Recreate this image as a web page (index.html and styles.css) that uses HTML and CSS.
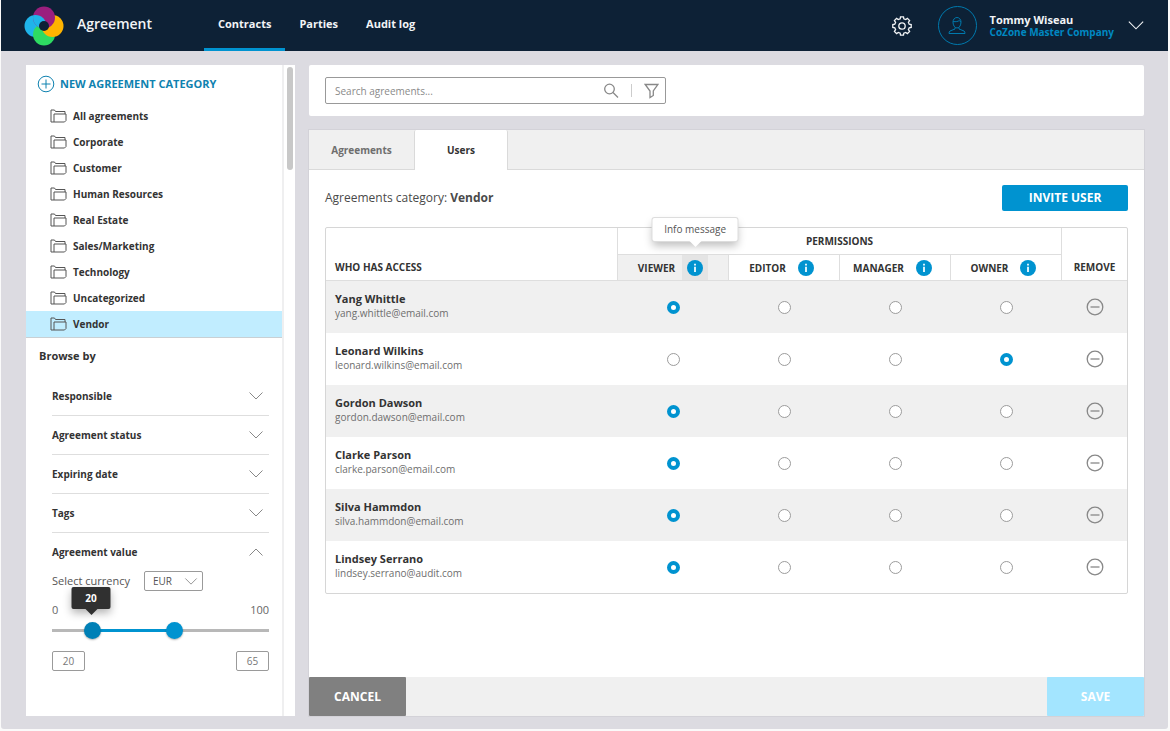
FILE: index.html
```html
<!DOCTYPE html>
<html lang="en">
<head>
    <meta charset="UTF-8">
    <meta name="viewport" content="width=device-width, initial-scale=1.0">
    <title>Agreement - Contracts</title>
    <link rel="stylesheet" href="styles.css">
</head>
<body>
    <svg width="0" height="0" class="sprite" aria-hidden="true">
        <symbol id="folder" viewBox="0 0 17 14">
            <path d="M4 13V5h12v6.500L14.500 13H1V1h3.500L5.500 2.500H15V5"/>
        </symbol>
        <symbol id="chevron" viewBox="0 0 16 10">
            <path d="M1.500 1.500 8 8l6.500-6.500"/>
        </symbol>
        <symbol id="minus" viewBox="0 0 18 18">
            <circle cx="9" cy="9" r="7.800"/>
            <path d="M4.500 9h9"/>
        </symbol>
        <symbol id="info" viewBox="0 0 16 16">
            <circle cx="8" cy="8" r="8" fill="#0093d0"/>
            <path d="M7 3.800h2v1.700H7zM7 6.700h2V12H7z" fill="#d9f1fb"/>
        </symbol>
    </svg>

    <div class="app">
        <header class="topbar">
            <a href="#" class="brand">
                <svg class="logo" width="40" height="40" viewBox="0 0 40 40" aria-hidden="true">
                    <clipPath id="petal"><circle cx="20" cy="11.500" r="11"/></clipPath>
                    <circle cx="11.500" cy="20" r="11" fill="#1fb4ea"/>
                    <circle cx="20" cy="28.500" r="11" fill="#2edb62"/>
                    <circle cx="28.500" cy="20" r="11" fill="#ffb400"/>
                    <circle cx="20" cy="11.500" r="11" fill="#9b1f7e"/>
                    <circle cx="11.500" cy="20" r="11" fill="#1fb4ea" clip-path="url(#petal)"/>
                    <circle cx="20" cy="20" r="5" fill="#0d2136"/>
                </svg>
                <span>Agreement</span>
            </a>
            <nav class="main-nav">
                <a href="#" class="active">Contracts</a>
                <a href="#">Parties</a>
                <a href="#">Audit log</a>
            </nav>
            <div class="account">
                <button type="button" class="icon-btn settings" aria-label="Settings">
                    <svg width="20" height="20" viewBox="0 0 20 20">
                        <path d="M8.200 2.800 8.500.8h3l.3 2 1.900.8 1.700-1.200 2.200 2.200-1.200 1.700.8 1.900 2 .3v3l-2 .3-.8 1.900 1.200 1.700-2.200 2.200-1.700-1.200-1.900.8-.3 2h-3l-.3-2-1.900-.8-1.700 1.200-2.200-2.200 1.200-1.700-.8-1.900-2-.3v-3l2-.3.8-1.900-1.200-1.700 2.200-2.200 1.700 1.200z"/>
                        <circle cx="10" cy="10" r="3.200"/>
                    </svg>
                </button>
                <span class="avatar">
                    <svg width="18" height="20" viewBox="0 0 18 20" aria-hidden="true">
                        <path d="M5 6a4 4.500 0 0 1 8 0c0 3-1.500 6-4 6S5 9 5 6zM5.200 5.500c2.500.5 5 0 6-1 .5.7 1 1 1.600 1M7 11.500v1.500l-5 2c-.8.500-1 1.500-1 2.500h16c0-1-.2-2-1-2.500l-5-2v-1.500"/>
                    </svg>
                </span>
                <div class="who">
                    <strong>Tommy Wiseau</strong>
                    <span>CoZone Master Company</span>
                </div>
                <button type="button" class="icon-btn" aria-label="Account menu">
                    <svg width="18" height="11" viewBox="0 0 16 10"><use href="#chevron"/></svg>
                </button>
            </div>
        </header>

        <div class="layout">
            <aside class="sidebar">
                <div class="sidebar-body">
                    <button type="button" class="new-category">
                        <svg width="18" height="18" viewBox="0 0 18 18" aria-hidden="true">
                            <circle cx="9" cy="9" r="7.800"/>
                            <path d="M4.500 9h9M9 4.500v9"/>
                        </svg>
                        NEW AGREEMENT CATEGORY
                    </button>
                    <ul class="categories">
                        <li><a href="#"><svg><use href="#folder"/></svg>All agreements</a></li>
                        <li><a href="#"><svg><use href="#folder"/></svg>Corporate</a></li>
                        <li><a href="#"><svg><use href="#folder"/></svg>Customer</a></li>
                        <li><a href="#"><svg><use href="#folder"/></svg>Human Resources</a></li>
                        <li><a href="#"><svg><use href="#folder"/></svg>Real Estate</a></li>
                        <li><a href="#"><svg><use href="#folder"/></svg>Sales/Marketing</a></li>
                        <li><a href="#"><svg><use href="#folder"/></svg>Technology</a></li>
                        <li><a href="#"><svg><use href="#folder"/></svg>Uncategorized</a></li>
                        <li><a href="#" class="selected"><svg><use href="#folder"/></svg>Vendor</a></li>
                    </ul>
                    <h2>Browse by</h2>
                    <div class="filters">
                        <button type="button" class="filter">Responsible<svg><use href="#chevron"/></svg></button>
                        <button type="button" class="filter">Agreement status<svg><use href="#chevron"/></svg></button>
                        <button type="button" class="filter">Expiring date<svg><use href="#chevron"/></svg></button>
                        <button type="button" class="filter">Tags<svg><use href="#chevron"/></svg></button>
                        <button type="button" class="filter open">Agreement value<svg><use href="#chevron"/></svg></button>
                        <div class="currency">
                            <label for="currency">Select currency</label>
                            <span class="select">
                                <select id="currency">
                                    <option>EUR</option>
                                    <option>USD</option>
                                </select>
                                <svg><use href="#chevron"/></svg>
                            </span>
                        </div>
                        <div class="scale"><span>0</span><span>100</span></div>
                        <div class="slider">
                            <span class="fill" style="left: 18%; width: 38%"></span>
                            <input type="range" class="low" min="0" max="100" value="16" aria-label="Minimum value">
                            <input type="range" min="0" max="100" value="57" aria-label="Maximum value">
                            <span class="value-tip" style="left: 18%">20</span>
                        </div>
                        <div class="bounds">
                            <input type="text" value="20" aria-label="From">
                            <input type="text" value="65" aria-label="To">
                        </div>
                    </div>
                </div>
                <div class="scrollbar"><span></span></div>
            </aside>

            <main class="content">
                <section class="search-card">
                    <form class="search">
                        <input type="search" placeholder="Search agreements..." aria-label="Search agreements">
                        <button type="submit" class="icon-btn" aria-label="Search">
                            <svg width="16" height="16" viewBox="0 0 16 16">
                                <circle cx="6.500" cy="6" r="4.800"/>
                                <path d="m10 9.500 5 5"/>
                            </svg>
                        </button>
                        <span class="divider"></span>
                        <button type="button" class="icon-btn" aria-label="Filter">
                            <svg width="15" height="16" viewBox="0 0 15 16">
                                <path d="M1.200 1.500h12.600L9.300 8v4.500l-3.300 2V8z"/>
                            </svg>
                        </button>
                    </form>
                </section>

                <section class="panel">
                    <div class="tabs" role="tablist">
                        <button type="button" role="tab">Agreements</button>
                        <button type="button" role="tab" class="current" aria-selected="true">Users</button>
                    </div>
                    <div class="panel-body">
                        <div class="panel-head">
                            <p>Agreements category: <strong>Vendor</strong></p>
                            <button type="button" class="btn-primary">INVITE USER</button>
                        </div>
                        <table class="users">
                            <colgroup>
                                <col class="col-name">
                                <col class="col-role">
                                <col class="col-role">
                                <col class="col-role">
                                <col class="col-role">
                                <col class="col-remove">
                            </colgroup>
                            <thead>
                                <tr>
                                    <th rowspan="2" class="name">WHO HAS ACCESS</th>
                                    <th colspan="4" class="group">PERMISSIONS</th>
                                    <th rowspan="2" class="last">REMOVE</th>
                                </tr>
                                <tr>
                                    <th class="hovered">
                                        <div class="role">VIEWER
                                            <button type="button" class="info" aria-label="About viewer"><svg><use href="#info"/></svg><span class="tooltip">Info message</span></button>
                                        </div>
                                    </th>
                                    <th><div class="role">EDITOR <button type="button" class="info" aria-label="About editor"><svg><use href="#info"/></svg></button></div></th>
                                    <th><div class="role">MANAGER <button type="button" class="info" aria-label="About manager"><svg><use href="#info"/></svg></button></div></th>
                                    <th><div class="role">OWNER <button type="button" class="info" aria-label="About owner"><svg><use href="#info"/></svg></button></div></th>
                                </tr>
                            </thead>
                            <tbody>
                                <tr>
                                    <td class="name"><strong>Yang Whittle</strong><span>yang.whittle@email.com</span></td>
                                    <td><input type="radio" name="u1" aria-label="Viewer" checked></td>
                                    <td><input type="radio" name="u1" aria-label="Editor"></td>
                                    <td><input type="radio" name="u1" aria-label="Manager"></td>
                                    <td><input type="radio" name="u1" aria-label="Owner"></td>
                                    <td><button type="button" class="icon-btn remove" aria-label="Remove Yang Whittle"><svg><use href="#minus"/></svg></button></td>
                                </tr>
                                <tr>
                                    <td class="name"><strong>Leonard Wilkins</strong><span>leonard.wilkins@email.com</span></td>
                                    <td><input type="radio" name="u2" aria-label="Viewer"></td>
                                    <td><input type="radio" name="u2" aria-label="Editor"></td>
                                    <td><input type="radio" name="u2" aria-label="Manager"></td>
                                    <td><input type="radio" name="u2" aria-label="Owner" checked></td>
                                    <td><button type="button" class="icon-btn remove" aria-label="Remove Leonard Wilkins"><svg><use href="#minus"/></svg></button></td>
                                </tr>
                                <tr>
                                    <td class="name"><strong>Gordon Dawson</strong><span>gordon.dawson@email.com</span></td>
                                    <td><input type="radio" name="u3" aria-label="Viewer" checked></td>
                                    <td><input type="radio" name="u3" aria-label="Editor"></td>
                                    <td><input type="radio" name="u3" aria-label="Manager"></td>
                                    <td><input type="radio" name="u3" aria-label="Owner"></td>
                                    <td><button type="button" class="icon-btn remove" aria-label="Remove Gordon Dawson"><svg><use href="#minus"/></svg></button></td>
                                </tr>
                                <tr>
                                    <td class="name"><strong>Clarke Parson</strong><span>clarke.parson@email.com</span></td>
                                    <td><input type="radio" name="u4" aria-label="Viewer" checked></td>
                                    <td><input type="radio" name="u4" aria-label="Editor"></td>
                                    <td><input type="radio" name="u4" aria-label="Manager"></td>
                                    <td><input type="radio" name="u4" aria-label="Owner"></td>
                                    <td><button type="button" class="icon-btn remove" aria-label="Remove Clarke Parson"><svg><use href="#minus"/></svg></button></td>
                                </tr>
                                <tr>
                                    <td class="name"><strong>Silva Hammdon</strong><span>silva.hammdon@email.com</span></td>
                                    <td><input type="radio" name="u5" aria-label="Viewer" checked></td>
                                    <td><input type="radio" name="u5" aria-label="Editor"></td>
                                    <td><input type="radio" name="u5" aria-label="Manager"></td>
                                    <td><input type="radio" name="u5" aria-label="Owner"></td>
                                    <td><button type="button" class="icon-btn remove" aria-label="Remove Silva Hammdon"><svg><use href="#minus"/></svg></button></td>
                                </tr>
                                <tr>
                                    <td class="name"><strong>Lindsey Serrano</strong><span>lindsey.serrano@audit.com</span></td>
                                    <td><input type="radio" name="u6" aria-label="Viewer" checked></td>
                                    <td><input type="radio" name="u6" aria-label="Editor"></td>
                                    <td><input type="radio" name="u6" aria-label="Manager"></td>
                                    <td><input type="radio" name="u6" aria-label="Owner"></td>
                                    <td><button type="button" class="icon-btn remove" aria-label="Remove Lindsey Serrano"><svg><use href="#minus"/></svg></button></td>
                                </tr>
                            </tbody>
                        </table>
                    </div>
                    <footer class="panel-footer">
                        <button type="button" class="btn-cancel">CANCEL</button>
                        <button type="submit" class="btn-save">SAVE</button>
                    </footer>
                </section>
            </main>
        </div>
    </div>
</body>
</html>
```

FILE: styles.css
```css
* {
    box-sizing: border-box;
}
body {
    margin: 0;
    padding: 0 2px 2px 1px;
    min-height: 100vh;
    display: flex;
    background-color: #fafafa;
    font-family: "Open Sans", "Noto Sans", sans-serif;
    font-size: 11px;
    line-height: 16px;
    color: #333;
}
button, input, select {
    font: inherit;
    color: inherit;
    margin: 0;
}
button {
    padding: 0;
    border: none;
    background: none;
    cursor: pointer;
}
a {
    color: inherit;
    text-decoration: none;
}
svg {
    display: block;
    flex: none;
    fill: none;
    stroke: currentColor;
}
.sprite {
    position: absolute;
}
.app {
    flex: 1;
    display: flex;
    flex-direction: column;
    background-color: #dcdbe1;
    border-radius: 0 0 3px 3px;
}

/* Top bar */
.topbar {
    display: flex;
    align-items: center;
    height: 51px;
    padding: 0 23px;
    background-color: #0d2136;
    color: #f2f4f6;
}
.brand {
    display: flex;
    align-items: center;
    gap: 13px;
    font-size: 14px;
    font-weight: 600;
}
.brand span {
    padding-bottom: 3px;
}
.logo {
    stroke: none;
}
.main-nav {
    display: flex;
    align-self: stretch;
    margin-left: 52px;
    font-weight: bold;
}
.main-nav a {
    display: flex;
    align-items: center;
    padding: 0 14px;
    border-bottom: 3px solid transparent;
}
.main-nav .active {
    border-bottom-color: #0093d0;
}
.account {
    display: flex;
    align-items: center;
    margin-left: auto;
}
.icon-btn {
    display: flex;
    align-items: center;
    justify-content: center;
}
.settings {
    margin-right: 26px;
}
.settings svg {
    stroke-width: 1.3;
}
.avatar {
    display: flex;
    align-items: center;
    justify-content: center;
    width: 39px;
    height: 39px;
    margin-right: 13px;
    border: 1px solid #0079ad;
    border-radius: 50%;
    color: #0079ad;
}
.who {
    display: flex;
    flex-direction: column;
    margin-right: 13px;
    line-height: 13px;
}
.who span {
    font-size: 10px;
    font-weight: bold;
    color: #0088c2;
}

/* Layout */
.layout {
    flex: 1;
    display: flex;
    gap: 14px;
    padding: 14px 24px 13px 25px;
}
.sidebar {
    display: flex;
    width: 269px;
    background-color: #fff;
}
.sidebar-body {
    flex: 1;
    border-right: 2px solid #efeff0;
}
.scrollbar {
    padding: 2px 2px 0 3px;
}
.scrollbar span {
    display: block;
    width: 6px;
    height: 103px;
    border-radius: 3px;
    background-color: #c8c8c8;
}
.new-category {
    display: flex;
    align-items: center;
    gap: 5px;
    margin: 10px 0 10px 11px;
    font-weight: bold;
    color: #0f82b0;
}
.categories {
    list-style: none;
    margin: 0;
    padding: 0;
    font-size: 10px;
    font-weight: bold;
}
.categories a {
    display: flex;
    align-items: center;
    gap: 6px;
    height: 26px;
    padding-left: 24px;
}
.categories svg {
    width: 17px;
    height: 14px;
    color: #555;
}
.categories .selected {
    background-color: #c1edff;
    box-shadow: 0 1px 0 #c9d0d4;
}
h2 {
    margin: 11px 0 13px 13px;
    font-size: 11px;
    line-height: 16px;
}
.filters {
    padding: 0 13px 0 26px;
}
.filter {
    display: flex;
    align-items: center;
    justify-content: space-between;
    width: 100%;
    height: 39px;
    padding-right: 5px;
    border-bottom: 1px solid #dedede;
    font-size: 10px;
    font-weight: bold;
}
.filter svg,
.select svg {
    width: 16px;
    height: 10px;
    color: #888;
}
.filter.open {
    height: 37px;
    border-bottom: none;
}
.filter.open svg {
    transform: rotate(180deg);
}
.currency {
    display: flex;
    align-items: center;
    gap: 14px;
    margin-top: 1px;
    color: #555;
}
.select {
    position: relative;
    display: flex;
}
.select select {
    appearance: none;
    width: 59px;
    height: 20px;
    padding: 0 8px;
    border: 1px solid #9a9a9a;
    border-radius: 2px;
    background: none;
    font-size: 10px;
    line-height: 18px;
}
.select svg {
    position: absolute;
    right: 5px;
    top: 6px;
    width: 14px;
    height: 9px;
    pointer-events: none;
}
.scale {
    display: flex;
    justify-content: space-between;
    margin: 11px 0 3px;
    color: #666;
}
.slider {
    position: relative;
    height: 18px;
    background: linear-gradient(#b8b8b8, #b8b8b8) center / 100% 3px no-repeat;
}
.slider .fill {
    position: absolute;
    top: 8px;
    height: 3px;
    background-color: #0093d0;
}
.slider input {
    position: absolute;
    inset: 0;
    width: 100%;
    appearance: none;
    background: none;
    pointer-events: none;
}
.slider input::-webkit-slider-thumb {
    appearance: none;
    width: 17px;
    height: 17px;
    border-radius: 50%;
    background-color: #0093d0;
    box-shadow: 0 1px 2px rgba(0, 0, 0, 0.3);
    pointer-events: auto;
}
.slider .low::-webkit-slider-thumb {
    background-color: #0080b6;
}
.value-tip {
    position: absolute;
    bottom: 30px;
    width: 39px;
    padding: 3px 0;
    border-radius: 2px;
    background-color: #303030;
    box-shadow: 0 4px 8px rgba(0, 0, 0, 0.3);
    color: #fff;
    font-size: 10px;
    font-weight: bold;
    text-align: center;
    transform: translateX(-50%);
}
.value-tip::after,
.tooltip::after {
    content: "";
    position: absolute;
    top: 100%;
    left: 50%;
    border: 6px solid transparent;
    border-bottom: none;
    border-top-color: #303030;
    transform: translateX(-50%);
}
.bounds {
    display: flex;
    justify-content: space-between;
    margin-top: 12px;
}
.bounds input {
    width: 33px;
    height: 20px;
    padding: 0;
    border: 1px solid #9a9a9a;
    border-radius: 2px;
    font-size: 10px;
    text-align: center;
    color: #777;
}

/* Content */
.content {
    flex: 1;
    display: flex;
    flex-direction: column;
    gap: 14px;
}
.search-card {
    padding: 12px 16px;
    border-radius: 2px;
    background-color: #fff;
}
.search {
    display: flex;
    align-items: center;
    gap: 12px;
    width: 341px;
    height: 27px;
    padding: 0 6px 0 9px;
    border: 1px solid #999;
    border-radius: 2px;
    color: #888;
}
.search input {
    flex: 1;
    min-width: 0;
    padding: 0;
    border: none;
    outline: none;
    background: none;
    font-size: 10px;
}
.search input::placeholder {
    color: #8a8a8a;
}
.search svg {
    stroke-width: 1.3;
}
.divider {
    width: 1px;
    height: 13px;
    background-color: #ccc;
}
.panel {
    flex: 1;
    display: flex;
    flex-direction: column;
    background-color: #fff;
    box-shadow: 0 0 0 1px #d3d2d8;
}
.tabs {
    display: flex;
    height: 40px;
    background-color: #f0f0f0;
    box-shadow: inset 0 -1px 0 #dadada;
    font-weight: bold;
}
.tabs button {
    width: 105px;
    font-size: 10px;
    color: #6e6e6e;
}
.tabs .current {
    width: 94px;
    border: 1px solid #dadada;
    border-width: 0 1px;
    border-radius: 2px 2px 0 0;
    background-color: #fff;
    color: #333;
}
.panel-body {
    flex: 1;
    padding: 15px 16px;
}
.panel-head {
    display: flex;
    align-items: center;
    justify-content: space-between;
    margin-bottom: 16px;
}
.panel-head p {
    margin: 0;
    font-size: 12px;
    color: #4a4a4a;
}
.btn-primary {
    width: 126px;
    height: 26px;
    border-radius: 2px;
    background-color: #0093d0;
    color: #fff;
    font-size: 12px;
    font-weight: bold;
}

/* Users table */
.users {
    width: 100%;
    table-layout: fixed;
    border-collapse: separate;
    border-spacing: 0;
    border: 1px solid #d6d6d6;
    border-radius: 2px;
}
.col-role {
    width: 111px;
}
.col-remove {
    width: 65px;
}
.users th {
    height: 26px;
    padding: 0;
    border-right: 1px solid #dedede;
    border-bottom: 1px solid #dedede;
    font-size: 10px;
    font-weight: bold;
}
.users th.group {
    height: 27px;
}
.users th.name,
.users th.last {
    padding-bottom: 5px;
    vertical-align: bottom;
}
.users th.last {
    border-right: none;
}
.users th.hovered {
    background-color: #f0f0f0;
}
.role {
    display: flex;
    align-items: center;
    justify-content: center;
    gap: 7px;
}
.info {
    position: relative;
    display: flex;
    align-items: center;
    justify-content: center;
    width: 26px;
    height: 25px;
}
.info svg {
    width: 16px;
    height: 16px;
    stroke: none;
}
.hovered .info {
    background-color: #e4e4e4;
}
.tooltip {
    position: absolute;
    bottom: 39px;
    left: 50%;
    width: 85px;
    padding: 3px 0 4px;
    border-radius: 2px;
    background-color: #fff;
    box-shadow: 0 0 0 1px #ddd, 0 5px 8px rgba(0, 0, 0, 0.25);
    color: #555;
    font-size: 10px;
    font-weight: normal;
    transform: translateX(-50%);
}
.tooltip::after {
    border-top-color: #fff;
}
.users td {
    height: 52px;
    padding: 0;
    text-align: center;
    vertical-align: middle;
}
.users .name {
    padding-left: 9px;
    text-align: left;
}
.users td.name {
    padding-bottom: 2px;
}
.users tbody tr:nth-child(odd) {
    background-color: #f0f0f0;
}
.users td strong,
.users td span {
    display: block;
    line-height: 15px;
}
.users td strong {
    font-size: 11px;
}
.users td span {
    font-size: 10px;
    color: #6e6e6e;
}
.users input {
    appearance: none;
    display: block;
    width: 13px;
    height: 13px;
    margin: 0 auto;
    border: 1px solid #9c9c9c;
    border-radius: 50%;
    background-color: #fff;
}
.users input:checked {
    border: 4px solid #0093d0;
}
.remove {
    margin: 0 auto;
    color: #888;
}
.remove svg {
    width: 18px;
    height: 18px;
    stroke-width: 1.3;
}

/* Footer */
.panel-footer {
    display: flex;
    justify-content: space-between;
    background-color: #f0f0f0;
}
.panel-footer button {
    width: 97px;
    height: 39px;
    border-radius: 1px;
    color: #fff;
    font-size: 12px;
    font-weight: bold;
}
.btn-cancel {
    background-color: #808080;
}
.btn-save {
    background-color: #a3e5ff;
}
```
